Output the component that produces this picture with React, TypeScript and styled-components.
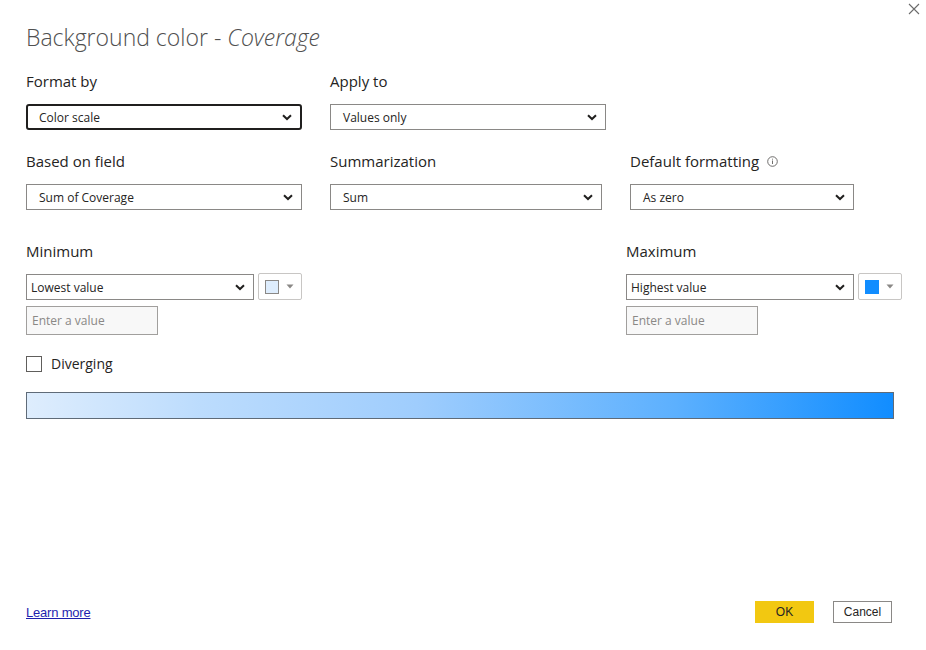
import React from "react";
import styled, { createGlobalStyle } from "styled-components";

const Global = createGlobalStyle`
  html, body { margin: 0; padding: 0; background: #fff; }
  body { font-family: "Open Sans", "Noto Sans", "Liberation Sans", sans-serif; color: #252423; }
  * { box-sizing: border-box; }
`;

const Dialog = styled.div`
  position: relative;
  width: 926px;
  height: 650px;
  padding: 21px 24px 27px 26px;
  display: flex;
  flex-direction: column;
`;

const Close = styled.button`
  position: absolute;
  top: 2px;
  right: 5px;
  width: 14px;
  height: 14px;
  padding: 0;
  border: none;
  background: none;
  display: flex;
  align-items: center;
  justify-content: center;
`;

const Title = styled.h1`
  margin: 0;
  font-size: 23px;
  font-weight: 300;
  line-height: 32px;
  color: #505050;
  em { font-style: italic; }
`;

const Row = styled.div<{ $top: number; $spread?: boolean }>`
  display: flex;
  gap: 28px;
  margin-top: ${(p) => p.$top}px;
  justify-content: ${(p) => (p.$spread ? "space-between" : "flex-start")};
  width: 876px;
`;

const Field = styled.div<{ $w: number }>`
  width: ${(p) => p.$w}px;
  display: flex;
  flex-direction: column;
`;

const Label = styled.div`
  font-size: 15px;
  line-height: 20px;
  height: 20px;
  margin-top: -1px;
  margin-bottom: 13px;
  color: #252423;
  display: flex;
  align-items: center;
  gap: 8px;
`;

const SelectBox = styled.div<{ $focus?: boolean; $pad?: number; $w?: number }>`
  height: 26px;
  ${(p) => (p.$w ? `width: ${p.$w}px;` : "")}
  border: ${(p) => (p.$focus ? "2px solid #201f1e" : "1px solid #8a8886")};
  border-radius: ${(p) => (p.$focus ? "3px" : "0")};
  display: flex;
  align-items: center;
  justify-content: space-between;
  padding: 0 8px 0 ${(p) => (p.$pad ?? 12) - (p.$focus ? 2 : 1)}px;
  font-size: 12px;
  color: #252423;
  background: #fff;
`;

const Chevron = () => (
  <svg width="10" height="7" viewBox="0 0 10 7">
    <path d="M1 1.2 L5 5 L9 1.2" fill="none" stroke="#201f1e" strokeWidth="2" />
  </svg>
);

const Select = ({ value, focus, pad, w }: { value: string; focus?: boolean; pad?: number; w?: number }) => (
  <SelectBox $focus={focus} $pad={pad} $w={w}>
    <span>{value}</span>
    <Chevron />
  </SelectBox>
);

const PickerRow = styled.div`
  display: flex;
  gap: 4px;
`;

const ColorButton = styled.div`
  width: 44px;
  height: 27px;
  margin-top: -1px;
  border: 1px solid #c8c6c4;
  border-radius: 2px;
  display: flex;
  align-items: center;
  padding-left: 6px;
  gap: 7px;
  background: #fff;
`;

const Swatch = styled.div<{ $color: string }>`
  width: 14px;
  height: 14px;
  border: 1px solid ${(p) => (p.$color === "#118dff" ? "#118dff" : "#8a8886")};
  background: ${(p) => p.$color};
`;

const Caret = () => (
  <svg width="8" height="5" viewBox="0 0 8 5">
    <path d="M0.5 0.5 L7.5 0.5 L4 4.5 Z" fill="#8a8886" />
  </svg>
);

const ValueInput = styled.div`
  margin-top: 6px;
  width: 132px;
  height: 29px;
  border: 1px solid #a19f9d;
  background: #f8f8f8;
  font-size: 12px;
  color: #8a8886;
  display: flex;
  align-items: center;
  padding-left: 5px;
`;

const CheckRow = styled.label`
  display: flex;
  align-items: center;
  gap: 9px;
  height: 16px;
  line-height: 16px;
  margin-top: 21px;
  font-size: 14px;
  color: #252423;
`;

const Box = styled.span`
  width: 16px;
  height: 16px;
  border: 1px solid #605e5c;
  background: #fff;
`;

const Gradient = styled.div`
  margin-top: 20px;
  width: 868px;
  height: 27px;
  border: 1px solid #5f6b78;
  background: linear-gradient(to right, #deedfd 0%, #bcdcfd 20%, #9fcdfd 45%, #5cb0fe 75%, #118dff 100%);
`;

const Footer = styled.div`
  margin-top: auto;
  display: flex;
  align-items: center;
  justify-content: space-between;
  width: 866px;
`;

const Link = styled.a`
  font-size: 13px;
  color: #1f1fae;
  text-decoration: underline;
  font-family: "Liberation Sans", sans-serif;
  letter-spacing: -0.2px;
`;

const Buttons = styled.div`
  display: flex;
  gap: 19px;
`;

const Btn = styled.button<{ $primary?: boolean }>`
  width: 59px;
  height: 22px;
  font-family: "Liberation Sans Narrow", "Liberation Sans", sans-serif;
  font-size: 12px;
  color: #252423;
  background: ${(p) => (p.$primary ? "#f2c811" : "#fff")};
  border: ${(p) => (p.$primary ? "none" : "1px solid #8a8886")};
  padding: 0;
`;

const Info = () => (
  <svg width="11" height="11" viewBox="0 0 11 11">
    <circle cx="5.5" cy="5.5" r="4.8" fill="none" stroke="#605e5c" strokeWidth="0.9" />
    <rect x="5.05" y="4.5" width="0.9" height="3.5" fill="#605e5c" />
    <rect x="5.05" y="2.7" width="0.9" height="0.9" fill="#605e5c" />
  </svg>
);

export default function App() {
  return (
    <>
      <Global />
      <Dialog>
        <Close aria-label="Close">
          <svg width="12" height="12" viewBox="0 0 12 12">
            <path d="M1 1 L11 11 M11 1 L1 11" stroke="#6b6b6b" strokeWidth="1.1" />
          </svg>
        </Close>
        <Title>
          Background color - <em>Coverage</em>
        </Title>

        <Row $top={19}>
          <Field $w={276}>
            <Label>Format by</Label>
            <Select value="Color scale" focus pad={13} />
          </Field>
          <Field $w={276}>
            <Label>Apply to</Label>
            <Select value="Values only" pad={13} />
          </Field>
        </Row>

        <Row $top={22}>
          <Field $w={276}>
            <Label>Based on field</Label>
            <Select value="Sum of Coverage" pad={13} />
          </Field>
          <Field $w={272}>
            <Label>Summarization</Label>
            <Select value="Sum" pad={13} />
          </Field>
          <Field $w={224}>
            <Label>
              Default formatting <Info />
            </Label>
            <Select value="As zero" pad={13} />
          </Field>
        </Row>

        <Row $top={32} $spread>
          <Field $w={276}>
            <Label>Minimum</Label>
            <PickerRow>
              <Select value="Lowest value" pad={5} w={228} />
              <ColorButton>
                <Swatch $color="#deedfd" />
                <Caret />
              </ColorButton>
            </PickerRow>
            <ValueInput>Enter a value</ValueInput>
          </Field>
          <Field $w={276}>
            <Label>Maximum</Label>
            <PickerRow>
              <Select value="Highest value" pad={5} w={228} />
              <ColorButton>
                <Swatch $color="#118dff" />
                <Caret />
              </ColorButton>
            </PickerRow>
            <ValueInput>Enter a value</ValueInput>
          </Field>
        </Row>

        <CheckRow>
          <Box />
          Diverging
        </CheckRow>

        <Gradient />

        <Footer>
          <Link href="#">Learn more</Link>
          <Buttons>
            <Btn $primary>OK</Btn>
            <Btn>Cancel</Btn>
          </Buttons>
        </Footer>
      </Dialog>
    </>
  );
}
